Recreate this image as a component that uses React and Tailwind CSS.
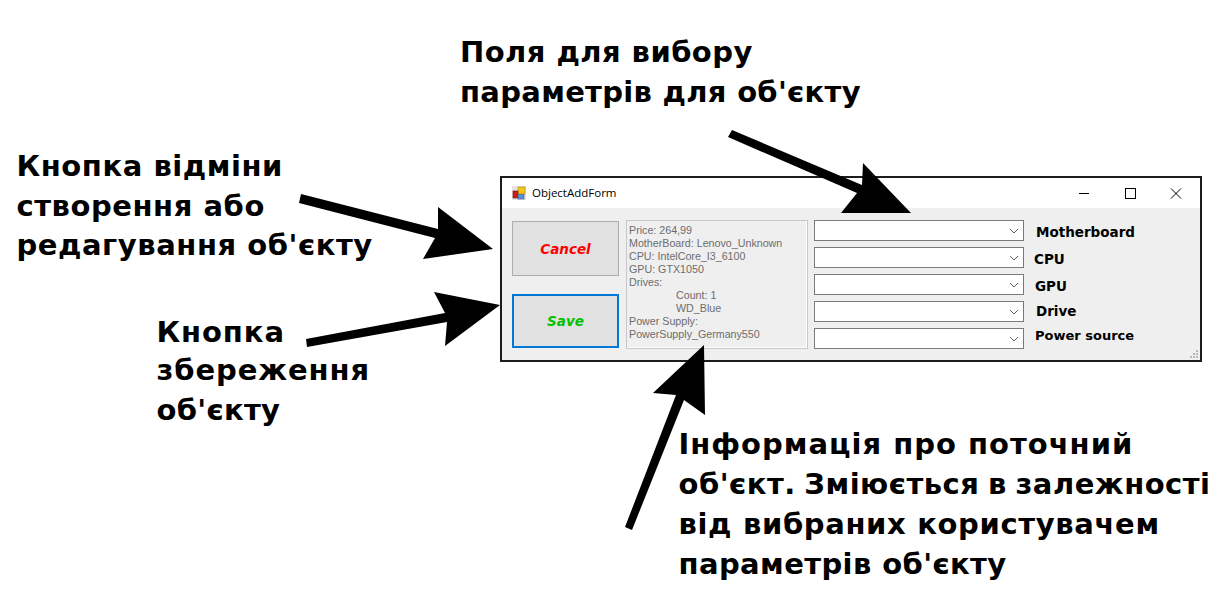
import React from 'react';

const note = "absolute whitespace-nowrap font-['DejaVu_Sans',sans-serif] font-bold text-[29px] leading-[40px] text-black";

const infoLines = [
  { text: 'Price: 264,99' },
  { text: 'MotherBoard: Lenovo_Unknown' },
  { text: 'CPU: IntelCore_I3_6100' },
  { text: 'GPU: GTX1050' },
  { text: 'Drives:' },
  { text: 'Count: 1', indent: true },
  { text: 'WD_Blue', indent: true },
  { text: 'Power Supply:' },
  { text: 'PowerSupply_Germany550' },
];

const fields = [
  { label: 'Motherboard', cls: 'ml-[12px] translate-y-[2px] text-[13.5px]' },
  { label: 'CPU', cls: 'ml-[10px] translate-y-[2px] text-[13.5px]' },
  { label: 'GPU', cls: 'ml-[11px] translate-y-[2px] text-[13.5px]' },
  { label: 'Drive', cls: 'ml-[12px] text-[13.5px]' },
  { label: 'Power source', cls: 'ml-[11px] -translate-y-[3px] text-[13px]' },
];

const Combo = () => (
  <div className="relative w-[210px] h-[21px] bg-white border border-[#7a7a7a]">
    <svg className="absolute right-[4px] top-[7px]" width="10" height="6" viewBox="0 0 10 6" fill="none">
      <path d="M1 1l4 4 4-4" stroke="#606060" strokeWidth="1" />
    </svg>
  </div>
);

const Arrows = () => (
  <svg className="absolute inset-0 pointer-events-none" width="1232" height="598" viewBox="0 0 1232 598">
    <polygon fill="#000" points="301,194 438,229 438,207 493,249 423,259 435,238 299,203" />
    <polygon fill="#000" points="306,339 445,313 434,292 500,305 445,346 447,322 307,347" />
    <polygon fill="#000" points="732,130 862,185 863,163 911,213 841,213 857,193 728,137" />
    <polygon fill="#000" points="625,527 676,395 653,393 704,345 705,415 684,400 632,530" />
  </svg>
);

export default function App() {
  return (
    <div className="relative w-[1232px] h-[598px] bg-white overflow-hidden">
      <div className={note + ' left-[460px] top-[32px]'}>
        <div className="tracking-[0.45px]">Поля для вибору</div>
        <div className="tracking-[0.3px]">параметрів для об'єкту</div>
      </div>
      <div className={note + ' left-[16.5px] top-[146px] tracking-[0.55px]'}>
        <div>Кнопка відміни</div>
        <div>створення або</div>
        <div className="-mt-[1px]">редагування об'єкту</div>
      </div>
      <div className={note + ' left-[156.5px] top-[312px]'}>
        <div className="tracking-[0.9px]">Кнопка</div>
        <div className="-mt-[2px] tracking-[0.9px]">збереження</div>
        <div className="tracking-[0.3px]">об'єкту</div>
      </div>
      <div className={note + ' left-[678.5px] top-[424px]'}>
        <div className="tracking-[1px]">Інформація про поточний</div>
        <div className="tracking-[0.5px] [word-spacing:-2px]">об'єкт. Зміюється в залежності</div>
        <div className="tracking-[0.65px]">від вибраних користувачем</div>
        <div className="tracking-[0.4px]">параметрів об'єкту</div>
      </div>

      <div className="absolute left-[500px] top-[176px] w-[702px] h-[186px] border-2 border-[#1c1c1c] bg-[#efefef] flex flex-col">
        <div className="h-[30px] bg-white flex items-center pl-[10px] pr-[1px] font-['Open_Sans',sans-serif] text-[11.5px] text-black">
          <svg width="14" height="14" viewBox="0 0 14 14" className="mr-[6px]">
            <rect x="0" y="0" width="14" height="14" fill="#e4e4e4" />
            <rect x="6" y="1" width="7" height="7" fill="#f5c518" stroke="#a88a20" strokeWidth="0.6" />
            <rect x="1" y="5" width="5" height="7" fill="#c8201c" stroke="#801010" strokeWidth="0.6" />
            <rect x="6" y="8.5" width="6" height="4.5" fill="#5a8fd8" stroke="#33609a" strokeWidth="0.6" />
          </svg>
          <span>ObjectAddForm</span>
          <div className="ml-auto flex items-center">
            <svg width="46" height="30" viewBox="0 0 46 30"><path d="M18 15.5h10" stroke="#000" /></svg>
            <svg width="46" height="30" viewBox="0 0 46 30" fill="none"><rect x="18.5" y="10.5" width="10" height="10" stroke="#000" /></svg>
            <svg width="46" height="30" viewBox="0 0 46 30" fill="none"><path d="M18 10.5l10 10M28 10.5l-10 10" stroke="#000" /></svg>
          </div>
        </div>

        <div className="relative flex-1 flex pl-[10px] pt-[12px]">
          <div className="w-[107px] flex flex-col gap-[18px] pt-[1px] mr-[7px]">
            <div className="h-[55px] pt-[2px] bg-[#e1e1e1] border border-[#adadad] flex items-center justify-center font-['DejaVu_Sans',sans-serif] font-bold italic text-[13.5px] text-[#ff0000]">
              Cancel
            </div>
            <div className="h-[54px] bg-[#e1e1e1] border-2 border-[#0078d7] flex items-center justify-center font-['DejaVu_Sans',sans-serif] font-bold italic text-[13.5px] text-[#00c000]">
              Save
            </div>
          </div>

          <div className="w-[182px] h-[129px] border border-[#c8c8c8] shadow-[inset_-1px_-1px_0_#ffffff] mr-[6px] pl-[2px] pt-[3px] font-['Liberation_Sans',sans-serif] text-[10.7px] leading-[13px] text-[#6d6d6d]">
            {infoLines.map((line, i) => (
              <div key={i} className={line.indent ? 'pl-[47px]' : ''}>{line.text}</div>
            ))}
          </div>

          <div className="flex flex-col gap-[6px]">
            {fields.map((f) => (
              <div key={f.label} className="flex items-center">
                <Combo />
                <span className={"font-['DejaVu_Sans',sans-serif] font-bold text-black " + f.cls}>{f.label}</span>
              </div>
            ))}
          </div>

          <svg className="absolute right-[1px] bottom-[1px]" width="10" height="10" viewBox="0 0 10 10" fill="#b8b8b8">
            <rect x="7" y="1" width="2" height="2" />
            <rect x="4" y="4" width="2" height="2" />
            <rect x="7" y="4" width="2" height="2" />
            <rect x="1" y="7" width="2" height="2" />
            <rect x="4" y="7" width="2" height="2" />
            <rect x="7" y="7" width="2" height="2" />
          </svg>
        </div>
      </div>

      <Arrows />
    </div>
  );
}
